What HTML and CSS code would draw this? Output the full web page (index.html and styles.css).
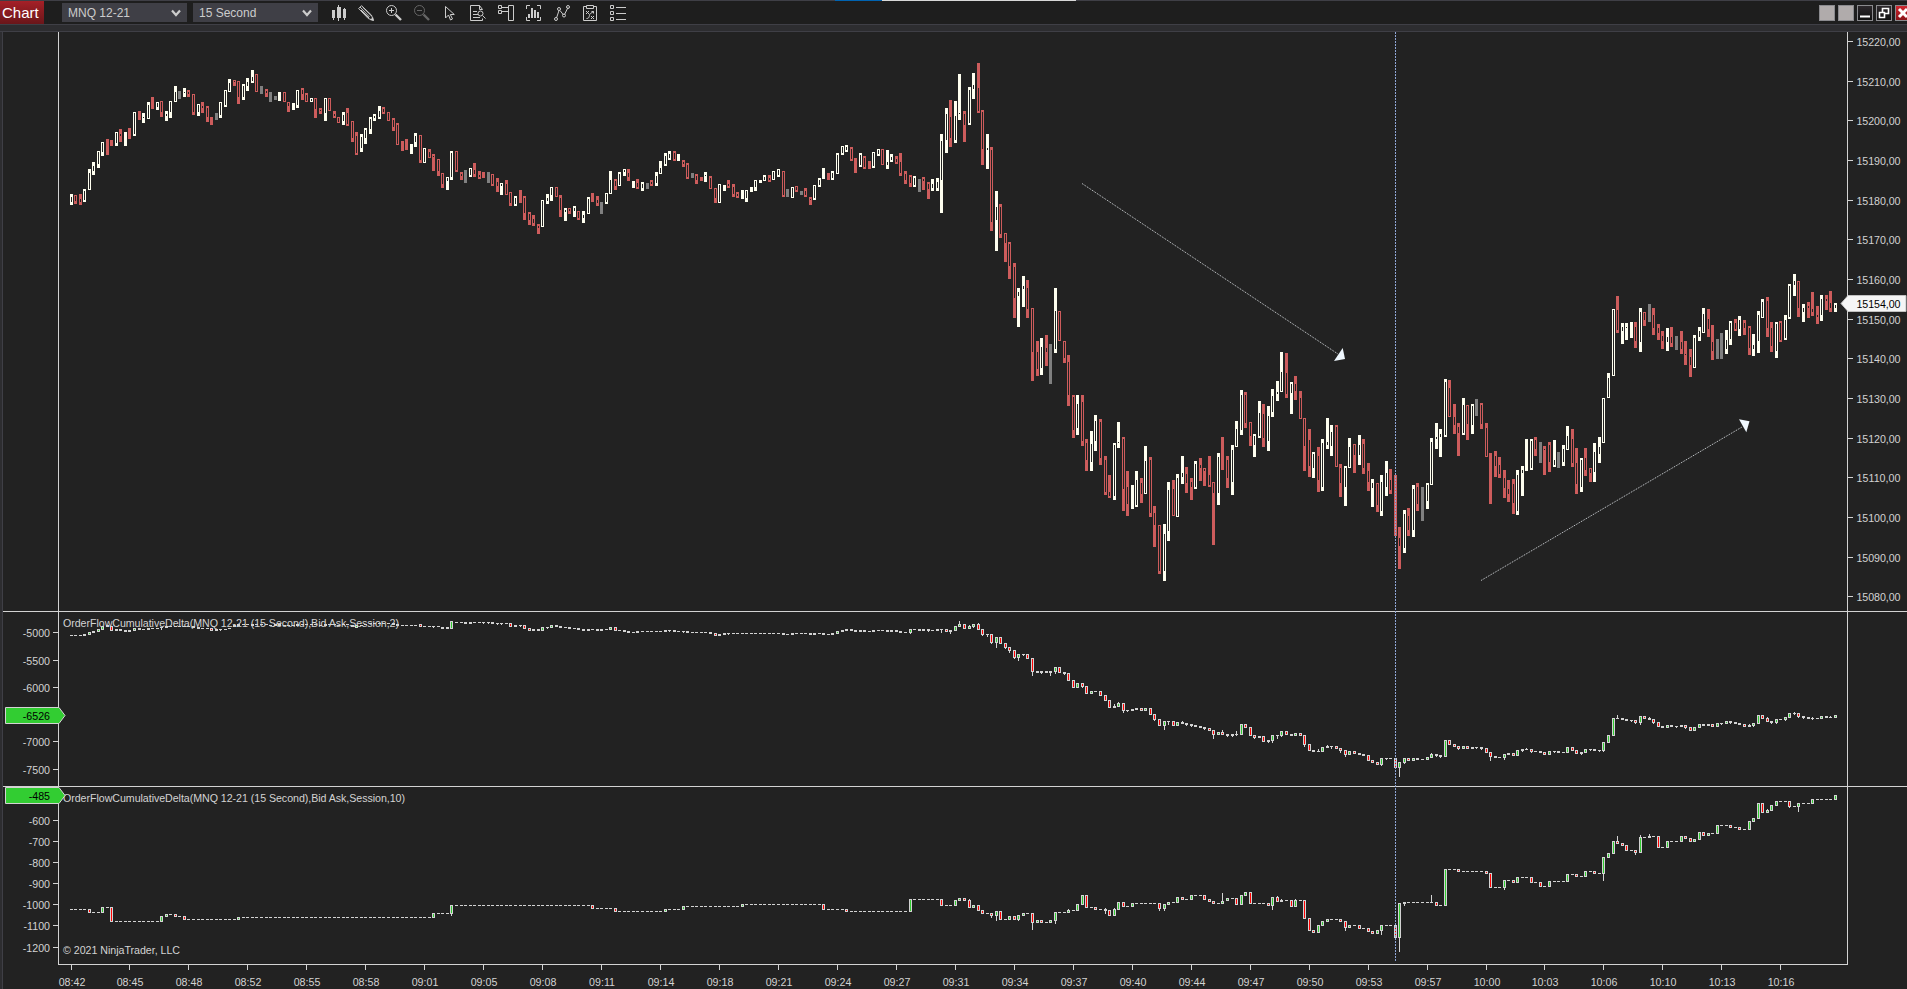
FILE: index.html
```html
<!DOCTYPE html>
<html lang="en">
<head>
<meta charset="utf-8">
<title>Chart - MNQ 12-21</title>
<link rel="stylesheet" href="styles.css">
</head>
<body>

<header class="toolbar">
  <div class="tab">Chart</div>
  <div class="combo combo-instrument">MNQ 12-21
    <svg class="chevron" viewBox="0 0 10 8"><path d="M1 1.5l4 4.5 4-4.5"/></svg>
  </div>
  <div class="combo">15 Second
    <svg class="chevron" viewBox="0 0 10 8"><path d="M1 1.5l4 4.5 4-4.5"/></svg>
  </div>

  <div class="icons">
    <!-- bar style -->
    <svg class="icon" viewBox="0 0 16 16"><path class="solid" d="M2 5h3v8h-3zM3 13h1v2h-1zM7 2h4v11h-4zM8 0h1v16h-1zM13 4h3v9h-3zM14 3h1v12h-1z"/></svg>
    <!-- drawing tools -->
    <svg class="icon" viewBox="0 0 16 16"><path d="M.7 3.5L3.5.7l10 9.5 1.7 5-5-1.7zM2 2l9.5 10M5 2.5l8.5 8.5M3 5l8 8"/><path class="solid" d="M12 15l4 1-1-4z"/></svg>
    <!-- zoom in -->
    <svg class="icon" viewBox="0 0 16 16"><circle cx="5.5" cy="5.5" r="5"/><path d="M3 5.5h5M5.5 3v5"/><path class="thick" d="M9.5 9.5l5.5 5.5"/></svg>
    <!-- zoom out -->
    <svg class="icon icon-off" viewBox="0 0 16 16"><circle cx="5.5" cy="5.5" r="5"/><path d="M3 5.5h5"/><path class="thick" d="M9.5 9.5l5.5 5.5"/></svg>
    <!-- cursor -->
    <svg class="icon" viewBox="0 0 16 16"><path d="M3.5 1.5v11.5l3-3 2 5 2-1-2.200-4.500h4z"/></svg>
    <!-- data box -->
    <svg class="icon" viewBox="0 0 16 16"><path d="M12.500 4.500L9.500.5h-9v15h12v-2M9.500.5v4h3M3 6.500h4M3 9.500h5M3 12.500h7"/><circle cx="10.500" cy="8.500" r="2.500"/><path d="M12.500 10.500l3 3"/></svg>
    <!-- chart trader -->
    <svg class="icon" viewBox="0 0 16 16"><path d="M.5.500h3v3h-3zM.5 5.500h3v3h-3zM4 2.500h6M4 6.500h6M10.500.500h5v15h-5z"/></svg>
    <!-- indicators -->
    <svg class="icon" viewBox="0 0 16 16"><path d="M4 .5H.5V4M.5 12v3.500H4M11 .5h3.500V4M14.500 12v3.500H11"/><path class="solid" d="M2 9h2v4h-2zM5 3h2v10h-2zM8 5h2v8h-2zM11 7h2v6h-2z"/></svg>
    <!-- strategies -->
    <svg class="icon" viewBox="0 0 16 16"><path d="M2.500 13L5 5.500M6 5.500l3.500 4.500M10.500 9.500l3.500-7"/><circle cx="2" cy="14" r="1.500"/><circle cx="5" cy="4" r="1.500"/><circle cx="10" cy="10.500" r="1.500"/><circle cx="14" cy="2" r="1.500"/></svg>
    <!-- strategy performance -->
    <svg class="icon" viewBox="0 0 16 16"><path d="M4 1.500H1.500v14h13v-14H12M4.500.500h7v3h-7zM4 6l3 3M7 6l-3 3M9 11l3 3M12 11l-3 3M4.500 13.500c4 0 2-4 4-5l3-2M9.500 6.500h2v2"/></svg>
    <!-- properties -->
    <svg class="icon" viewBox="0 0 16 16"><path d="M.5.500h3v3h-3zM.5 6.500h3v3h-3zM.5 12.500h3v3h-3zM6 2.500h10M6 8.500h10M6 14.500h10"/></svg>
  </div>

  <div class="win-buttons">
    <span class="win win-blank"></span>
    <span class="win win-blank win-gap"></span>
    <span class="win"><svg viewBox="0 0 14 14"><path class="solid" d="M2 9.500h10v2h-10z"/></svg></span>
    <span class="win"><svg viewBox="0 0 14 14"><path d="M5.500 2.500h6v5h-6z"/><path class="over" d="M2.500 6.500h5v5h-5z"/></svg></span>
    <span class="win win-close"><svg viewBox="0 0 14 14"><path d="M3 3l8 8M11 3l-8 8"/></svg></span>
  </div>
  <div class="top-edge"><i></i><b></b></div>
</header>
<div class="strip"></div>

<main class="chart">
  <svg id="plot" width="1905" height="957" viewBox="2 32 1905 957"></svg>
</main>

<script src="chart.js"></script>
</body>
</html>
```
FILE: styles.css
```css
* { box-sizing: border-box; }

body {
  margin: 0;
  width: 1907px;
  height: 989px;
  overflow: hidden;
  background: #2d2d30;
  font-family: "Liberation Sans", Arial, sans-serif;
}

.toolbar {
  position: relative;
  display: flex;
  align-items: center;
  height: 25px;
  background: #1e1e1e;
  border-top: 1px solid #3f3f46;
  border-bottom: 1px solid #3f3f46;
}

.tab {
  width: 44px;
  height: 23px;
  padding-left: 2px;
  margin-right: 18px;
  background: linear-gradient(#a52027, #6a161a);
  color: #fff;
  font-size: 15px;
  line-height: 23px;
}

.combo {
  display: flex;
  align-items: center;
  justify-content: space-between;
  width: 125px;
  height: 19px;
  padding: 0 6px;
  margin-right: 6px;
  background: #3f3f46;
  color: #ccc;
  font-size: 12px;
}

.chevron { width: 10px; height: 8px; fill: none; stroke: #ccc; stroke-width: 2.2; }

.icons { display: flex; gap: 12px; margin-left: 6px; }
.icon { width: 16px; height: 16px; fill: none; stroke: #ccc; stroke-width: 1; margin-top: 1px; }
.icon .solid { fill: #ccc; stroke: none; }
.icon .thick { stroke-width: 2.4; }
.icon-off { stroke: #666; }

.win-buttons { display: flex; gap: 3px; margin-left: auto; margin-right: -4px; margin-top: 1px; }
.win {
  width: 16px;
  height: 16px;
  border: 1px solid #8a8a8e;
  background: linear-gradient(#2c282c, #111);
}
.win svg { display: block; width: 14px; height: 14px; fill: none; stroke: #fff; stroke-width: 1.6; }
.win .solid { fill: #fff; stroke: none; }
.win .over { fill: #1e1c1e; }
.win-blank { background: #b0abab; }
.win-close { background: linear-gradient(#d02830, #8a1218); }
.win-close svg { stroke-width: 3; }

/* window behind shows through on the first row */
.top-edge { position: absolute; top: -1px; left: 835px; display: flex; height: 1px; }
.top-edge i { width: 47px; background: #0063b1; }
.top-edge b { width: 194px; background: #d8d8d8; }

.strip { height: 7px; background: #2d2d30; border-bottom: 1px solid #3f3f46; }

.chart { display: flex; padding-left: 2px; height: 957px; }
#plot { display: block; background: #222; border: 0; }
#plot rect { shape-rendering: crispEdges; }

.axis { fill: #d3d3d3; }
.frame { fill: #3f3f46; }
.label { fill: #d3d3d3; font-size: 10.67px; }
.label-end { text-anchor: end; }
.label-mid { text-anchor: middle; }

.W { fill: #fffff0; }
.R { fill: #cd5c5c; }
.G { fill: #808080; }
.hollow { fill: #222; }

.n { fill: #d3d3d3; }
.g { fill: #32cd32; }
.r { fill: #f00; }

.marker { fill: #32cd32; stroke: #d3d3d3; }
.marker-price { fill: #f5f5f5; stroke: #c0c0c0; }
.marker-text { fill: #000; font-size: 10.67px; }

.arrow { stroke: #d4d8dc; stroke-width: 1; stroke-dasharray: 1 1; }
.arrow-head { fill: #f0f8ff; }
.session-line { stroke: #8fa6d6; stroke-width: 1; stroke-dasharray: 2 1; }
```
FILE: chart.js
```js
var plot = document.getElementById("plot");
var NS = "http://www.w3.org/2000/svg";

function add(tag, attrs, text) {
    var el = document.createElementNS(NS, tag);
    for (var k in attrs) el.setAttribute(k, attrs[k]);
    if (text !== undefined) el.textContent = text;
    plot.appendChild(el);
    return el;
}

function rect(cls, x, y, w, h) {
    add("rect", { "class": cls, x: x, y: y, width: w, height: h });
}

// column of bar i
function barX(i) {
    return Math.floor(71.04 + i * 4.5352);
}

// colour, high, low and the hollow part between open and close
var price = `
W194,205,197,202 R195,204,196,201 R194,205,199,202 W189,202,191,200 W169,190,173,189 W162,175,166,171 W151,168,152,164 W142,156,143,152
R139,155 R140,146 W132,146,133,143 R129,142,134,136 W132,146 R128,139 W112,136,113,134 R111,120 W113,123,117,118 W102,119,105,118
R97,109 W102,110,103,107 R101,117,102,112 W111,121,114,116 W101,118,102,112 W86,102,92,101 G91,99 W88,97,92,93 R90,97,92,94
R94,115,95,112 W104,116,105,112 R102,113,106,108 R106,122,108,117 R117,125 G113,120 W102,118,103,115 W90,107,91,105 W79,92,83,91
R80,86,81,82 R81,104,82,97 W84,100,86,97 W78,91,82,86 W70,83,77,81 R74,92,75,91 G86,94 R89,97,91,93 G92,102 G96,100 W92,101
R92,102,93,101 R102,112,103,106 W103,110 W90,108,91,105 R88,100,90,94 R93,102,95,101 W98,102,99,101 R98,118,99,109 R108,114,110,111
W98,121,99,113 R98,111,99,110 R111,118,114,116 R117,123,118,122 W112,125,115,121 R108,126,113,124 R121,142,122,138 R132,155,136,153
W134,152,137,148 W128,144,130,138 W117,134,119,129 W114,121,116,118 W106,119,111,117 R107,114,109,112 R112,121,113,120 R118,131,120,127
R123,145,125,144 R141,151 R139,150 W144,154 W133,147,136,142 R135,163,136,160 W148,163,149,162 R149,158,152,157 R154,171,156,157
R159,176,160,171 R173,188,174,184 W177,190,178,181 W151,180,153,177 R151,172,152,170 R172,180,174,176 G170,183 W168,177,169,175
R163,177,170,174 R171,179,175,177 R172,178 G172,183 R174,186,175,184 R178,192,182,186 W183,195,184,186 R180,195,184,194
R192,206,193,203 W196,206,198,204 R190,203 R196,220,198,213 R212,225,214,220 R215,226,219,223 R224,234,226,228 W200,227,201,226
W194,204,198,201 W187,201,188,195 R187,197,188,196 R195,217,198,210 W208,221,210,212 R208,214,209,211 W206,217,208,211 R211,220,212,218
W211,223,215,218 W197,214,199,213 R193,202 R196,206,200,203 G202,214 W193,204,194,202 W171,194,180,193 R179,190,181,186
W172,186,174,185 W169,176,170,172 R169,181,173,177 W181,188 R179,189,183,187 W182,191,184,188 G183,189 R180,186,182,184
W172,186,176,183 W161,174,168,173 W153,166,156,164 W151,160,154,158 R151,161,153,159 W154,161 R160,167,162,164 R163,179,165,177
G173,178 R174,184,176,180 R177,181 W172,182,175,176 R176,189,178,188 R188,203,189,198 W184,203,185,202 W185,191 R180,188,184,186
R184,197,187,194 R192,198,194,196 W190,199 W190,202,191,198 W187,192 W180,191,181,187 W180,183 W175,181,177,180 R175,182,178,180
W171,180,172,179 W169,177,170,175 R171,197,172,195 G189,197 W187,198,188,197 R186,192,187,190 G191,195 R188,197,191,195
R197,205,199,200 W185,200,186,198 W178,187,180,185 W168,179 R173,180 W171,180,173,178 W153,174,155,173 W146,155,147,153
W145,152,147,150 R147,161,149,159 R158,173 W153,167,155,165 R156,169,158,167 R161,169 W152,168,153,166 W149,156,150,154
R149,165,150,164 W150,169,162,165 W154,162,157,160 R156,164,159,162 R153,176,162,173 R171,184,174,180 R175,187,177,183
W176,187,178,185 G179,192 R177,190,179,181 R182,199,184,189 W179,191,184,188 W178,191,182,188 W134,213,141,180 W108,153,114,140
R100,147,117,138 W101,143,116,140 W74,120,113,114 R111,142,114,125 W87,125,90,123 W73,99,85,89 R63,113,88,111 R110,165,112,149
W134,169,148,150 R147,231,150,222 W191,251,207,220 R204,238,207,234 R233,262,234,243 R242,279,244,266 R263,318,267,298
W288,327,292,296 W276,307,286,289 R280,318,288,309 R308,381,309,352 R341,376,352,369 W338,375,347,368 R335,366,348,352 G344,384
W288,353,311,349 R311,341,312,340 R341,363,342,358 R355,406,362,395 R395,438,397,430 W395,435,404,428 R395,446,402,441
R439,471,443,460 W431,471,444,462 W415,451,421,441 R419,465,422,458 R456,495,460,492 R475,498,492,496 W443,500,445,496
W422,448,442,443 R437,511,439,489 R471,516,487,504 W485,509 W471,507,480,505 R478,503,483,494 W446,494,461,493 R457,517,460,513
R506,547,513,525 R525,574,526,571 W524,581,534,571 W482,541,490,531 R480,516,489,515 W474,517,478,516 W456,484,473,477
R467,493,474,483 R478,500,482,487 W461,489,464,487 R458,481,465,468 R468,486,469,471 R456,487,475,485 R482,545,483,493
W453,505,457,493 R437,470 R456,488,460,478 W445,495,450,482 W421,447,429,446 W390,435,395,430 R392,428,395,423 R422,446,423,436
W434,457,436,445 W401,438,413,436 R404,447,414,438 W406,451,416,441 W389,417,396,412 W381,401,392,394 W352,392,372,391
R353,398,373,394 W382,414,384,393 R376,400,384,391 R391,419,398,418 R418,471,419,446 R429,477,440,466 W452,478,454,468
R447,492,456,480 W439,491,443,487 W418,449,442,445 W425,456,432,446 R425,467,427,466 R464,497,468,483 W466,506,468,487
W438,468,447,467 R444,473,445,455 W435,465,445,455 R439,474,444,468 R463,491,471,482 W479,507,483,488 R483,512,484,505
W475,516,482,511 W461,496,473,487 R469,494,480,490 R475,536 R527,569,538,546 W510,553,514,548 R508,536,516,530 W485,537,489,530
R483,511,487,504 G487,521 W483,509,485,501 W438,485,442,484 W423,449,437,439 W429,457,434,437 W379,437,382,435 R380,417,388,416
R404,434,417,425 R423,456,427,433 W398,435,405,433 R405,440,406,424 W404,434,406,425 G399,416 R403,429,405,424 R423,457,428,456
R453,504 R451,477,456,466 R457,478,465,474 R470,498,478,488 R480,502,489,494 R479,514,484,503 W470,515,475,511 W466,496,470,473
W439,471 W439,470,441,468 R437,456,440,449 G442,463 R446,475,449,450 R442,472,445,462 W440,467,460,465 G452,468 W445,466,449,462
W426,450,436,449 R429,467,439,463 R448,494,463,484 W458,492,460,487 R448,476,458,470 R468,482,469,473 W443,482,452,472
W437,463,447,454 W398,443,399,442 W373,398,378,397 W309,376,310,375 R296,333,310,330 W323,344,327,331 W323,340,327,328 W322,338
R322,348,327,341 W308,352,312,342 R312,326,313,320 G304,322 R308,335,315,328 R324,340,328,333 R331,349,336,341 W328,351,337,342
R327,347,337,343 G336,350 R331,354,342,349 R341,365,354,355 R349,377,357,365 W335,368,338,367 W327,341,331,337 W308,333,314,332
R309,337,319,329 R325,360,342,351 G339,359 G333,359 W330,354,340,349 W321,345,323,339 R319,331,323,329 W316,336,320,329
R320,335,323,328 R326,355,328,348 W334,356,345,349 W311,353,315,341 W299,318,302,317 R297,337,301,328 R322,352,328,346
W322,358,324,351 R321,342,323,340 W315,340,320,338 W284,319,286,317 W274,296,281,285 R281,317,282,308 W304,322,308,312
R302,318,306,308 R292,316,309,312 R306,324,315,317 W295,321,299,315 R295,310,299,301 R291,312,303,308 W303,312,305,308`;

// [count x] colour, body top,bottom, ^high, _low
var delta2 = `
3xn635 n634,636 g632,635 n631,633 g629,632 g626,630 n625,627 r626,631 2xn629,631 2xn630,632 g628,631 n628,630 n629 n628,630 2xn628
n627_630 n626,628 5xn626 n626,628 n627,629 2xn628 r628,631 n629,631 n629_631 n629 n628 n625,627 n624,626 2xn624 n624,626 3xn624
n625 2xn624,626 3xn625 n624,626 4xn624 n625 n624,626 2xn624 n625 2xn624 n625,627 g625,628 n625 n624 5xn623 n623,625 n624,626
2xn625 n625_626 n625 r624,627 2xn626 n626_628 n626 2xn627,629 g621,629 2xn622
2xn622,624 2xn622 2xn622_624 n622,624 2xn623_625 n623 r623,627 n625,627 n625_627 r625,629 r628,631 2xn629,631 g627,631
n627_629 g625,628 n625,627 n626,628 n627 n627,629 n628 n628,630 2xn629,631 n629 2xn629,631 n629 g627,630 r627,631 n630 n630,632
n631,633 n632 n631,633 5xn631 n630,632 n630_632 n630,632 n631 n631_633 n631,633 4xn632 n632,634 r633,636 n634,636 n633,635
n633_635 11xn633 n633,635 n634 n633,635 3xn633 2xn633,635 n633 n633,635 n634 n633,635 g631,634 n630,632 2xn629,631 3xn630,632
n631 n630,632 2xn630 3xn630,632 n631,633 n632 g629,633_634 n629 2xn629,631 n629,631_632 n630 n629,631 n629_633 r629,632
n630,632_634 g626,631 g624,627^621 r624,629 g626,629^625 g624,627_628 r624,630^623 r629,635_636 n634_637 r634,643_644
g637,643_648 r637,644 r643,648_649 r647,651_653 r650,658_659 g654,658_661 n654_656 r654,659 r658,672_676 n671,673
n671,673_674 n671,673 n671,673_676 g667,672_674 r667,673 n672,674_675 r673,681 r680,688 g683,688 r683,687_688 r686,694
g691,694 n691 r691,696 r695,701 r700,708 n706,708^704 g703,707^702 r703,711_713 n710_712 n709,711 n708,710 r708,711 g708,711
r708,715 r714,720_721 r719,726 g721,726_730 n721_725 r721,726 g722,726 n722,724^721 n723,725_726 n724,726_727 n725,727
n726,728 n727,729_730 r728,731 r730,735_739 g732,735 r732,735^730 2xn734,736_737 n734^731_736 g724,735 r724,728 r727,736
r735,738_739 n736,738 r736,742 n740,742_743 g735,741_743 n735_739 g731,736_737 r731,735 n734,736 g733,736 r733,736
r735,745_747 r744,751 n750,752 n751^749 g747,752 n746,748^745 n746_749 r746,749 r748,751_753 r750,755_757 g751,755 r751,754
n753,755 n754,756 r755,761 r760,763 r762,765 g758,765_766 n758_760 n758 r758,768 g762,768_777 g758,763_764 r758,761
g758,761 n758,760 n759 g757,760 g754,758^753 n754,756_757 n755,757_758 g740,757 r740,745 r744,747 r746,749_750 g746,749
r746,749 n747,749 n747_749 n747,749_750 r748,753 r752,757_761 n756,758 n757 g754,758_760 n753,755 r753,756 g750,756
n749,751_752 n749^748 r749,752_753 n751 n751,753 r752,755 g751,755 n751_753 n751,753 n752 g747,753 r747,751 r750,754
n752,754_755 g749,753 n749_751 n749,751 n750_752 g742,751_752 g735,743 g718,736 n718^715 n718,720 n719,721 n720_722
r720,723_724 g716,723_725 r716,719 n718,720^717 r719,723_724 r722,727 n726,728 g725,728 n725,727 n726_728 n725,727
r725,728_729 r727,731 g727,731 g724,728 2xn724,726 r724,727 g723,727 n723_725 g721,724 n721,723_724 n722,724 n723,725
r724,727 n725,727^724 g723,726_727 g715,724 r715,719 r718,722^717 n721,723_724 g719,723_724 n719 g717,720_721 g713,718
n713^712_715 r713,717_718 n716,718_719 n717,719 n718^717_720 n718 g716,719 n716,718 n717^716 g715,718`;

var delta10 = `
4xn909 r909,913 2xn912 g907,913 n907 r907,922 10xn921 g916,922 g914,917 n914 r914,917 n916 r916,920 11xn919 g917,920 42xn917
g913,918 3xn913 g905,914_916 30xn905 r905,909 4xn908 r908,912 10xn911 g909,912 3xn909 g906,910 12xn906 g904,907 17xn904
r904,910 4xn909 r909,912 13xn911 g899,912 6xn899 r899,906 2xn905 g900,906 g898,901 r898,901 r900,908^899 g905,908 r905,911
r910,914 n913 r913,916_918 g911,916_921 r911,920 n919 g916,920 r916,920 g915,920_921 g913,916 n913 r913,923_930 g920,923
r920,923 n922 g920,923 g912,921_924 2xn912 g910,913^909 n910 g904,911 g895,905 r895,908 n907 r907,910 n909 n909,911^908_914
r910,916 g909,916^908 g902,910 r902,907 n906 g903,907 5xn903 r903,909_911 g904,909_911 g902,905 n902 g897,903 r897,900 n899
g895,900 2xn895 r895,900 r899,902 r901,904 n903 g901,904^893 g898,901 n898 r898,905 g895,905 g892,896 r892,904 3xn903
r903,906 g897,906_910 r897,902^896 n900,902^899 n900 r900,907 g900,907^899 n900 r900,919 r918,931 r930,933 g925,933 g921,926
g919,922 2xn919 r919,922 r921,928_931 g925,928 n925 r925,929 n928 r928,932 r931,934 g930,934 g925,931_935 2xn925 r925,938
g903,938_952 n902,904_906 5xn902 n902^895 r902,906 n905 g869,906 2xn869 r869,872 5xn871 r871,874 r873,888 2xn887
g880,888_890 n880 r880,883 g877,883 2xn877 r877,883 n882 r882,887 n886 g881,887 3xn881 g874,882 n874 r874,877 n876 g871,877
n871 r871,874 n873 g857,874_881 g853,858 g841,854 r841,844^836 r843,846 r845,851 n850 r850,853_855 g837,853^835 n837
n836,838^834 n836 r836,848 n847 g841,848 2xn841 g836,842 r836,839 r838,842 g839,842 g832,840 r832,836 g833,836 n833 g825,834
2xn825 r825,828 n827 r827,830 n829 g821,830 g818,822 g803,819 r803,813 g810,813^809 g805,811 g801,806 2xn801 r801,807_808
n806 g803,807_812 2xn803 g799,804 4xn799 g795,800`;

function drawPrice() {
    price.trim().split(/\s+/).forEach(function (bar, i) {
        var v = bar.slice(1).split(",").map(Number);
        var x = barX(i);
        rect(bar[0], x - 1, v[0], 3, v[1] - v[0]);
        if (v.length > 2) rect("hollow", x, v[2], 1, v[3] - v[2]);
    });
}

function drawDelta(data) {
    var i = 0;
    data.trim().split(/\s+/).forEach(function (bar) {
        var m = bar.match(/^(?:(\d+)x)?([ngr])(\d+)(?:,(\d+))?(?:\^(\d+))?(?:_(\d+))?$/);
        var top = +m[3], bottom = +(m[4] || top + 1);
        var high = +(m[5] || top), low = +(m[6] || bottom);
        for (var n = +(m[1] || 1); n > 0; n--, i++) {
            var x = barX(i);
            rect("n", x - 1, top, 3, bottom - top);
            if (high < top) rect("n", x, high, 1, top - high);
            if (low > bottom) rect("n", x, bottom, 1, low - bottom);
            if (m[2] != "n") rect(m[2], x, top + 1, 1, bottom - top - 2);
        }
    });
}

function leftTick(y, text) {
    rect("axis", 53, y, 5, 1);
    add("text", { "class": "label label-end", x: 50, y: y + 4.5 }, text);
}

// frame and panel separators
rect("frame", 2, 32, 1, 957);
rect("axis", 58, 32, 1, 933);
rect("axis", 1847, 32, 1, 933);
rect("axis", 3, 611, 1904, 1);
rect("axis", 3, 786, 1904, 1);
rect("axis", 58, 964, 1790, 1);

// price scale
for (var p = 0; p < 15; p++) {
    var py = Math.round(41.3 + p * 39.66 - 0.3);
    rect("axis", 1848, py, 5, 1);
    add("text", { "class": "label", x: 1856.5, y: py + 5, textLength: 44 }, (15220 - p * 10) + ",00");
}

// delta scales
[[632, -5000], [660, -5500], [687, -6000], [741, -7000], [769, -7500],
 [820, -600], [841, -700], [862, -800], [883, -900], [904, -1000], [925, -1100], [947, -1200]
].forEach(function (t) { leftTick(t[0], t[1]); });

// time scale, a label every 13 bars
["08:42", "08:45", "08:48", "08:52", "08:55", "08:58", "09:01", "09:05", "09:08", "09:11",
 "09:14", "09:18", "09:21", "09:24", "09:27", "09:31", "09:34", "09:37", "09:40", "09:44",
 "09:47", "09:50", "09:53", "09:57", "10:00", "10:03", "10:06", "10:10", "10:13", "10:16"
].forEach(function (t, i) {
    var x = barX(i * 13);
    rect("axis", x, 965, 1, 5);
    add("text", { "class": "label label-mid", x: x + 1, y: 986 }, t);
});

add("text", { "class": "label", x: 63, y: 627, textLength: 336 },
    "OrderFlowCumulativeDelta(MNQ 12-21 (15 Second),Bid Ask,Session,2)");
add("text", { "class": "label", x: 63, y: 802, textLength: 342 },
    "OrderFlowCumulativeDelta(MNQ 12-21 (15 Second),Bid Ask,Session,10)");
add("text", { "class": "label", x: 63, y: 954, textLength: 117 }, "\u00a9 2021 NinjaTrader, LLC");

drawPrice();
drawDelta(delta2);
drawDelta(delta10);

// drawn objects
add("line", { "class": "session-line", x1: 1395.5, y1: 32, x2: 1395.5, y2: 961 });
add("line", { "class": "arrow", x1: 1082, y1: 183.5, x2: 1338, y2: 354 });
add("path", { "class": "arrow-head", d: "M1342.7 348l2.300 11-11 2z" });
add("line", { "class": "arrow", x1: 1481, y1: 580.5, x2: 1742, y2: 427 });
add("path", { "class": "arrow-head", d: "M1739 419.300l10.500 2-3.200 11z" });

// last value markers
add("path", { "class": "marker-price", d: "M1841 303.500l7-8h58v16h-58z" });
add("text", { "class": "marker-text", x: 1856.5, y: 308, textLength: 44 }, "15154,00");
add("path", { "class": "marker", d: "M5.500 707.500h53.500l6 8-6 8h-53.500z" });
add("text", { "class": "marker-text label-end", x: 50, y: 720 }, "-6526");
add("path", { "class": "marker", d: "M5.500 787.500h53.500l6 8-6 8h-53.500z" });
add("text", { "class": "marker-text label-end", x: 50, y: 800 }, "-485");
```
